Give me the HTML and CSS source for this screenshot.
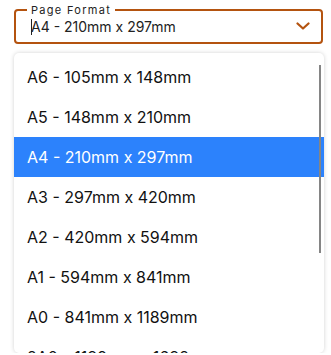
FILE: index.html
```html
<!DOCTYPE html>
<html lang="en">
<head>
    <meta charset="UTF-8">
    <meta name="viewport" content="width=device-width, initial-scale=1.0">
    <title>Page Format</title>
    <link rel="stylesheet" href="styles.css">
</head>
<body>

    <!-- Select field with floating legend -->
    <fieldset class="format-field">
        <legend>Page Format</legend>
        <div class="field-value">
            <span class="caret"></span>
            <span>A4 - 210mm x 297mm</span>
        </div>
        <svg class="chevron" width="14" height="8" viewBox="0 0 14 8">
            <path d="M1.5 1.5 L7 6.5 L12.5 1.5" fill="none" stroke="#b4530f" stroke-width="2.2" stroke-linecap="round" stroke-linejoin="round"/>
        </svg>
    </fieldset>

    <!-- Options list -->
    <div class="format-list">
        <ul>
            <li>A6 - 105mm x 148mm</li>
            <li>A5 - 148mm x 210mm</li>
            <li class="selected">A4 - 210mm x 297mm</li>
            <li>A3 - 297mm x 420mm</li>
            <li>A2 - 420mm x 594mm</li>
            <li>A1 - 594mm x 841mm</li>
            <li>A0 - 841mm x 1189mm</li>
            <li>2A0 - 1189mm x 1682mm</li>
        </ul>
        <div class="scroll-thumb"></div>
    </div>

</body>
</html>
```

FILE: styles.css
```css
/* Page base */
body {
    margin: 0;
    padding: 4px 8px 0 14px;
    font-family: Inter, "Noto Sans", sans-serif;
    background-color: #ffffff;
    color: #111;
}

/* Select field */
.format-field {
    position: relative;
    margin: 0;
    width: 309px;
    height: 40px;
    box-sizing: border-box;
    border: 2px solid #b4530f;
    border-radius: 4px;
    padding: 0 0 0 15px;
}

.format-field legend {
    font-size: 11px;
    letter-spacing: 1.3px;
    padding: 0 4px;
    margin-left: -4px;
    line-height: 12px;
    color: #222;
}

.field-value {
    display: flex;
    align-items: center;
    font-size: 14px;
    line-height: 18px;
    margin-top: 2px;
    color: #222;
}

.caret {
    width: 1px;
    height: 16px;
    background-color: #222;
    margin-right: -1px;
}

.chevron {
    position: absolute;
    right: 11px;
    top: 6px;
}

/* Dropdown list */
.format-list {
    position: relative;
    margin-top: 9px;
    width: 310px;
    height: 300px;
    overflow: hidden;
    border-radius: 5px;
    background-color: #fff;
    box-shadow: 0 0 4px rgba(0, 0, 0, 0.18);
}

.format-list ul {
    list-style: none;
    margin: 0;
    padding: 4px 0 0 0;
}

.format-list li {
    height: 40px;
    line-height: 40px;
    padding-left: 13px;
    font-size: 16px;
    color: #111;
}

.format-list li.selected {
    background-color: #2c82fc;
    color: #fff;
}

.scroll-thumb {
    position: absolute;
    top: 12px;
    right: 3px;
    width: 2px;
    height: 188px;
    background-color: #858585;
}
```
